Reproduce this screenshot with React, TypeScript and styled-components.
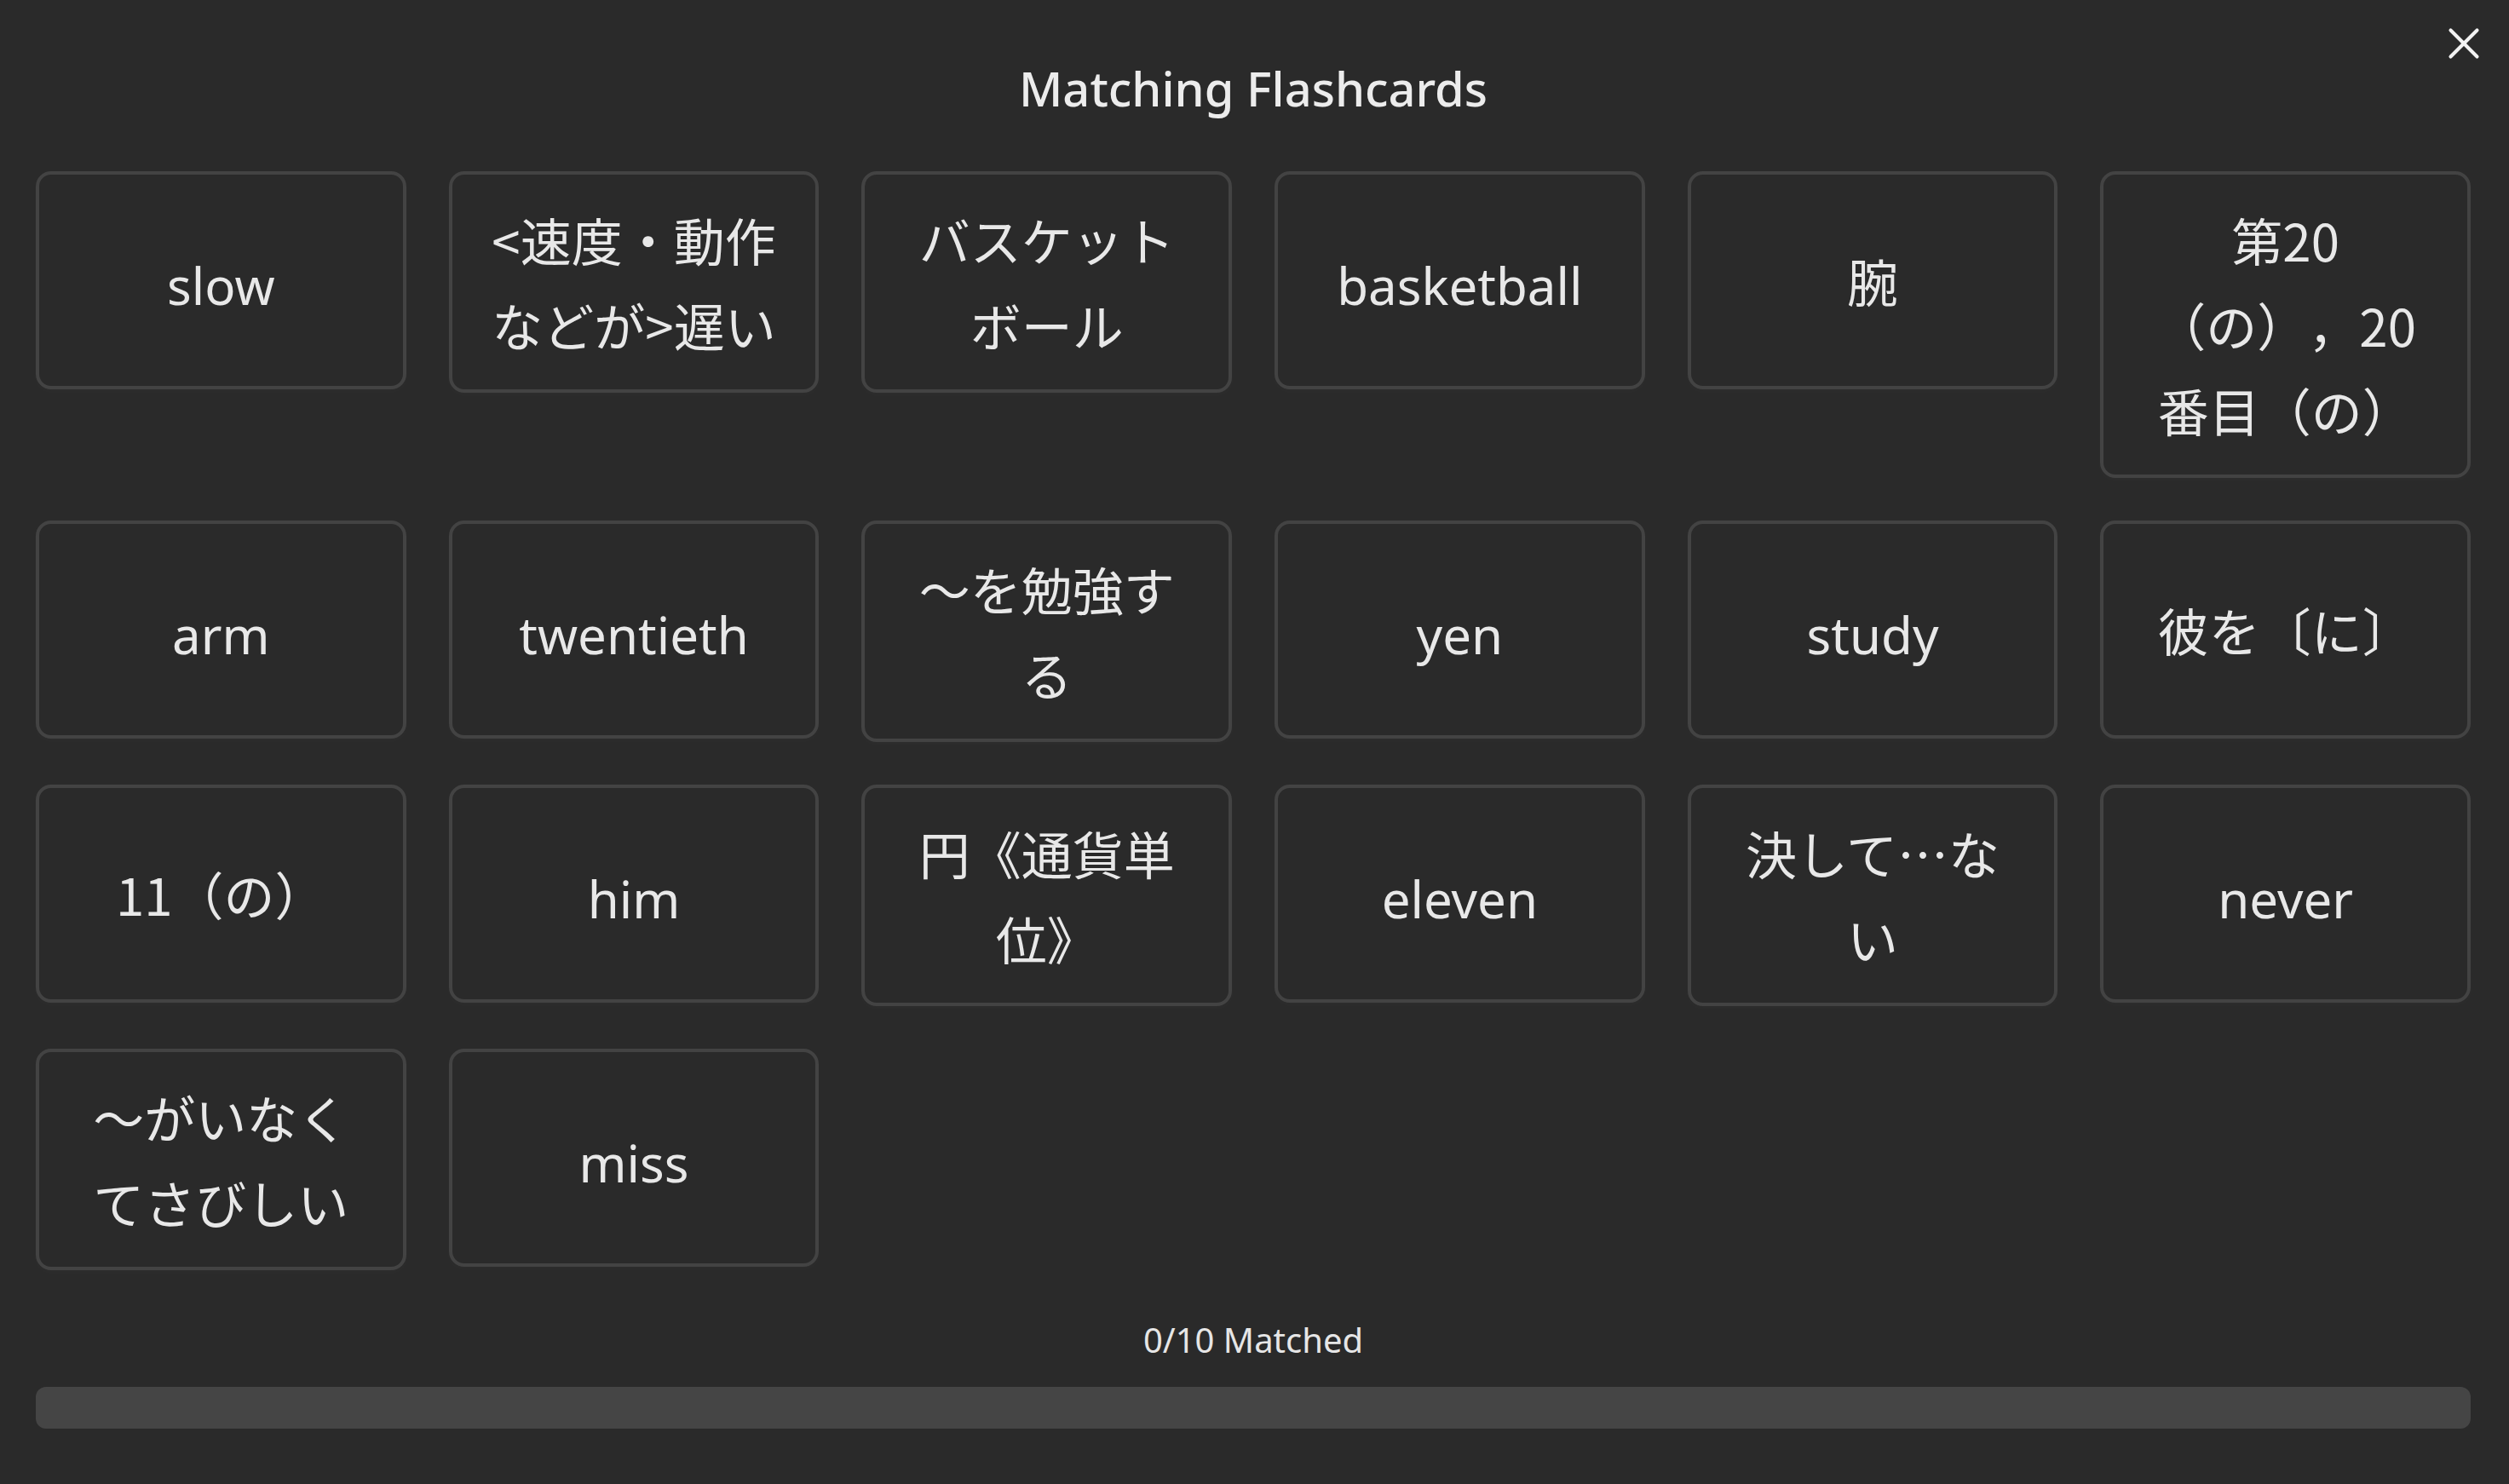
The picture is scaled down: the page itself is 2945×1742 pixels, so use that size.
import styled, { createGlobalStyle } from "styled-components";
import { X } from "lucide-react";

type CardType = {
  text: string;
  ja?: boolean;
};

const cards: CardType[] = [
  { text: "slow" },
  { text: "<速度・動作などが>遅い", ja: true },
  { text: "バスケットボール", ja: true },
  { text: "basketball" },
  { text: "腕", ja: true },
  { text: "第20（の），20番目（の）", ja: true },
  { text: "arm" },
  { text: "twentieth" },
  { text: "〜を勉強する", ja: true },
  { text: "yen" },
  { text: "study" },
  { text: "彼を〔に〕", ja: true },
  { text: "11（の）", ja: true },
  { text: "him" },
  { text: "円《通貨単位》", ja: true },
  { text: "eleven" },
  { text: "決して…ない", ja: true },
  { text: "never" },
  { text: "〜がいなくてさびしい", ja: true },
  { text: "miss" },
];

const matched = 0;
const total = 10;

export default function App() {
  return (
    <>
      <GlobalStyle />
      <Page>
        <CloseButton aria-label="Close">
          <X size={62} strokeWidth={1.6} />
        </CloseButton>
        <Title>Matching Flashcards</Title>
        <Grid>
          {cards.map((card, i) => (
            <Card key={i} $ja={card.ja}>
              {card.text}
            </Card>
          ))}
        </Grid>
        <Status>
          {matched}/{total} Matched
        </Status>
        <Progress>
          <ProgressFill style={{ width: `${(matched / total) * 100}%` }} />
        </Progress>
      </Page>
    </>
  );
}

const GlobalStyle = createGlobalStyle`
  * {
    box-sizing: border-box;
  }

  body {
    margin: 0;
    background: #2a2a2a;
    color: #e8e8e8;
    font-family: "Noto Sans", "Noto Sans CJK JP", sans-serif;
  }
`;

const Page = styled.div`
  position: relative;
  min-height: 1742px;
  padding: 65px 45px 0 42px;
  display: flex;
  flex-direction: column;
`;

const CloseButton = styled.button`
  position: absolute;
  top: 20px;
  right: 22px;
  width: 62px;
  height: 62px;
  padding: 0;
  border: none;
  background: transparent;
  color: #f2f2f2;
  cursor: pointer;
  display: flex;
  align-items: center;
  justify-content: center;

  svg {
    display: block;
  }
`;

const Title = styled.h1`
  margin: 0 0 60px;
  font-size: 56px;
  line-height: 76px;
  font-weight: 500;
  text-align: center;
  color: #ececec;
`;

const Grid = styled.div`
  display: grid;
  grid-template-columns: repeat(6, 1fr);
  gap: 50px;
  align-items: start;
`;

const Card = styled.div<{ $ja?: boolean }>`
  min-height: 256px;
  padding: ${(p) => (p.$ja ? "26px 36px" : "32px 36px 20px")};
  border: 4px solid #434343;
  border-radius: 18px;
  box-shadow: 0 3px 10px rgba(255, 255, 255, 0.02);
  display: flex;
  align-items: center;
  justify-content: center;
  text-align: center;
  font-family: ${(p) =>
    p.$ja
      ? `"Noto Sans CJK JP", "Noto Sans", sans-serif`
      : `"Noto Sans", "Noto Sans CJK JP", sans-serif`};
  font-size: 60px;
  line-height: 100px;
  text-spacing-trim: space-all;
  color: #e8e8e8;
`;

const Status = styled.div`
  margin-top: 55px;
  font-size: 40px;
  line-height: 54px;
  text-align: center;
  color: #e6e6e6;
`;

const Progress = styled.div`
  margin-top: 28px;
  height: 49px;
  border-radius: 12px;
  background: #454545;
  overflow: hidden;
`;

const ProgressFill = styled.div`
  height: 100%;
  background: #6fbf73;
`;
